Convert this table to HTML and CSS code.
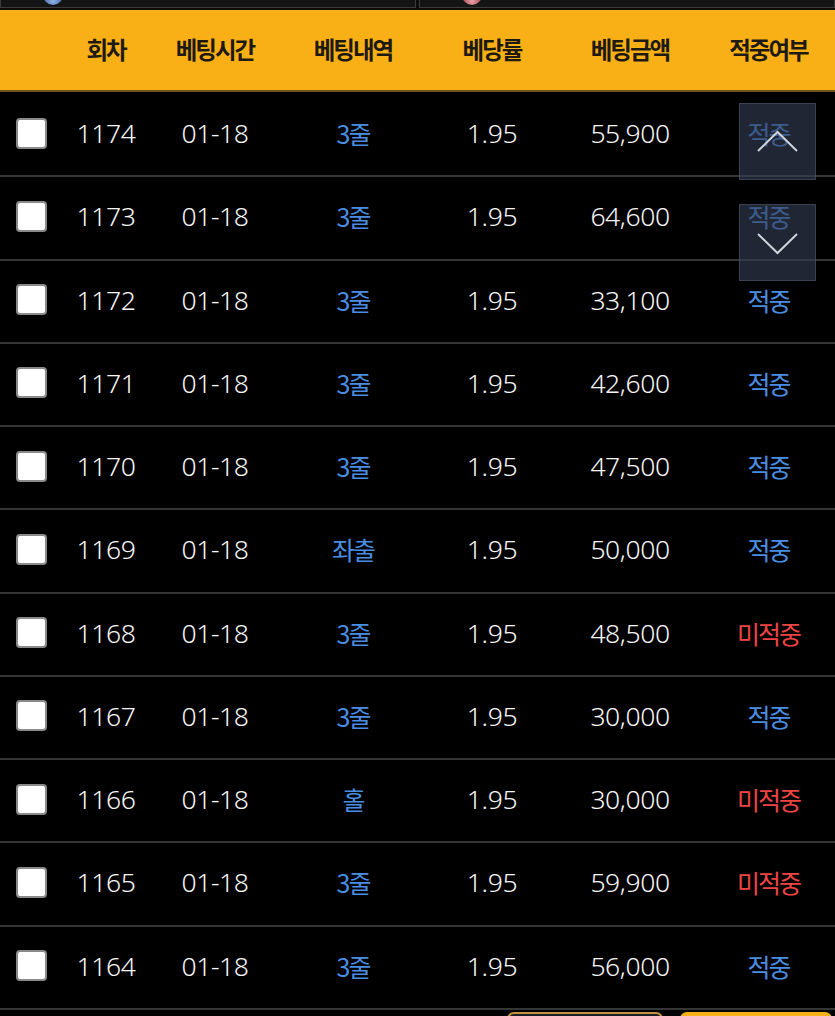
FILE: index.html
```html
<!DOCTYPE html>
<html lang="ko">
<head>
<meta charset="utf-8">
<title>베팅내역</title>
<link rel="stylesheet" href="styles.css">
</head>
<body>
<div class="page">
  <div class="topbar">
    <div class="topbox"><span class="dot dot-blue"></span></div>
    <div class="topbox"><span class="dot dot-red"></span></div>
  </div>

  <div class="table">
    <div class="row head">
      <div class="cell"></div>
      <div class="cell">회차</div>
      <div class="cell">베팅시간</div>
      <div class="cell">베팅내역</div>
      <div class="cell">베당률</div>
      <div class="cell">베팅금액</div>
      <div class="cell">적중여부</div>
    </div>
    <div class="body">
      <div class="row"><div class="cell"><span class="chk"></span></div><div class="cell">1174</div><div class="cell">01-18</div><div class="cell ko blue">3줄</div><div class="cell">1.95</div><div class="cell">55,900</div><div class="cell ko blue">적중</div></div>
      <div class="row"><div class="cell"><span class="chk"></span></div><div class="cell">1173</div><div class="cell">01-18</div><div class="cell ko blue">3줄</div><div class="cell">1.95</div><div class="cell">64,600</div><div class="cell ko blue">적중</div></div>
      <div class="row"><div class="cell"><span class="chk"></span></div><div class="cell">1172</div><div class="cell">01-18</div><div class="cell ko blue">3줄</div><div class="cell">1.95</div><div class="cell">33,100</div><div class="cell ko blue">적중</div></div>
      <div class="row"><div class="cell"><span class="chk"></span></div><div class="cell">1171</div><div class="cell">01-18</div><div class="cell ko blue">3줄</div><div class="cell">1.95</div><div class="cell">42,600</div><div class="cell ko blue">적중</div></div>
      <div class="row"><div class="cell"><span class="chk"></span></div><div class="cell">1170</div><div class="cell">01-18</div><div class="cell ko blue">3줄</div><div class="cell">1.95</div><div class="cell">47,500</div><div class="cell ko blue">적중</div></div>
      <div class="row"><div class="cell"><span class="chk"></span></div><div class="cell">1169</div><div class="cell">01-18</div><div class="cell ko blue">좌출</div><div class="cell">1.95</div><div class="cell">50,000</div><div class="cell ko blue">적중</div></div>
      <div class="row"><div class="cell"><span class="chk"></span></div><div class="cell">1168</div><div class="cell">01-18</div><div class="cell ko blue">3줄</div><div class="cell">1.95</div><div class="cell">48,500</div><div class="cell ko red">미적중</div></div>
      <div class="row"><div class="cell"><span class="chk"></span></div><div class="cell">1167</div><div class="cell">01-18</div><div class="cell ko blue">3줄</div><div class="cell">1.95</div><div class="cell">30,000</div><div class="cell ko blue">적중</div></div>
      <div class="row"><div class="cell"><span class="chk"></span></div><div class="cell">1166</div><div class="cell">01-18</div><div class="cell ko blue">홀</div><div class="cell">1.95</div><div class="cell">30,000</div><div class="cell ko red">미적중</div></div>
      <div class="row"><div class="cell"><span class="chk"></span></div><div class="cell">1165</div><div class="cell">01-18</div><div class="cell ko blue">3줄</div><div class="cell">1.95</div><div class="cell">59,900</div><div class="cell ko red">미적중</div></div>
      <div class="row"><div class="cell"><span class="chk"></span></div><div class="cell">1164</div><div class="cell">01-18</div><div class="cell ko blue">3줄</div><div class="cell">1.95</div><div class="cell">56,000</div><div class="cell ko blue">적중</div></div>
    </div>
  </div>

  <div class="actions">
    <button class="btn btn-dark">&nbsp;</button>
    <button class="btn btn-gold">&nbsp;</button>
  </div>

  <div class="scroll scroll-up">
    <svg width="77" height="77" viewBox="0 0 77 77"><polyline points="19,48 38.5,29 58,48" fill="none" stroke="#cfd3da" stroke-width="2"/></svg>
  </div>
  <div class="scroll scroll-down">
    <svg width="77" height="77" viewBox="0 0 77 77"><polyline points="19,30 38.5,49 58,30" fill="none" stroke="#cfd3da" stroke-width="2"/></svg>
  </div>
</div>
</body>
</html>
```

FILE: styles.css
```css
html, body {
  margin: 0;
  padding: 0;
  background: #000;
  overflow: hidden;
}
body {
  font-family: "Noto Sans CJK KR", "Noto Sans", sans-serif;
  color: #f2f2f2;
}
.page {
  position: relative;
  width: 835px;
  height: 1016px;
  overflow: hidden;
}
.topbar {
  display: flex;
  gap: 3px;
  height: 10px;
  background: #0c0c0c;
}
.topbox {
  flex: 1;
  height: 9px;
  margin-top: -1px;
  box-sizing: border-box;
  background: #141414;
  border: 1px solid #3c3c3c;
  border-top: none;
  position: relative;
  overflow: hidden;
}
.dot {
  position: absolute;
  top: -14px;
  width: 20px;
  height: 20px;
  border-radius: 50%;
}
.dot-blue { left: 42px; background: radial-gradient(circle at 50% 80%, #8fb4e8, #2c4f8a 70%); }
.dot-red { left: 42px; background: radial-gradient(circle at 50% 80%, #e8a0a8, #8a2c3c 70%); }

.row {
  display: grid;
  grid-template-columns: 62px 88px 130px 146px 132px 144px 133px;
  align-items: center;
}
.cell {
  text-align: center;
  white-space: nowrap;
}
.head {
  height: 82px;
  box-sizing: border-box;
  background: #f9b016;
  border-bottom: 2px solid #6e5418;
  color: #1e1a12;
  font-weight: 700;
  font-size: 23.5px;
  letter-spacing: -2px;
  padding-bottom: 2px;
}
.body {
  margin-top: 2px;
}
.body .row {
  height: 83.25px;
  box-sizing: border-box;
  border-bottom: 2px solid #353535;
  padding-bottom: 3px;
  font-family: "Noto Sans", "Noto Sans CJK KR", sans-serif;
  font-size: 26.5px;
  font-weight: 300;
  letter-spacing: -0.4px;
  color: #f6f6f6;
}
.body .cell.ko {
  font-family: "Noto Sans CJK KR", sans-serif;
  font-size: 25px;
  font-weight: 400;
  letter-spacing: -2px;
}
.blue { color: #4a8ee4; }
.red { color: #ef4444; }
.chk {
  display: block;
  margin: 0 0 0 16px;
  width: 31px;
  height: 31px;
  box-sizing: border-box;
  background: #fff;
  border: 2px solid #8a8a8a;
  border-radius: 4px;
}
.actions {
  display: flex;
  justify-content: flex-end;
  gap: 17px;
  padding: 2px 3px 0 0;
}
.btn {
  width: 156px;
  height: 44px;
  border-radius: 7px;
  font: inherit;
}
.btn-dark {
  background: #1b1f27;
  border: 2px solid #c8923a;
}
.btn-gold {
  width: 152px;
  background: #f9b016;
  border: 2px solid #f9b016;
}
.scroll {
  position: absolute;
  left: 739px;
  width: 77px;
  height: 77px;
  box-sizing: border-box;
  background: rgba(52, 62, 84, 0.62);
  border: 1px solid rgba(90, 100, 120, 0.45);
}
.scroll svg { display: block; position: absolute; left: -1px; top: -1px; }
.scroll-up { top: 103px; }
.scroll-down { top: 204px; }
```
